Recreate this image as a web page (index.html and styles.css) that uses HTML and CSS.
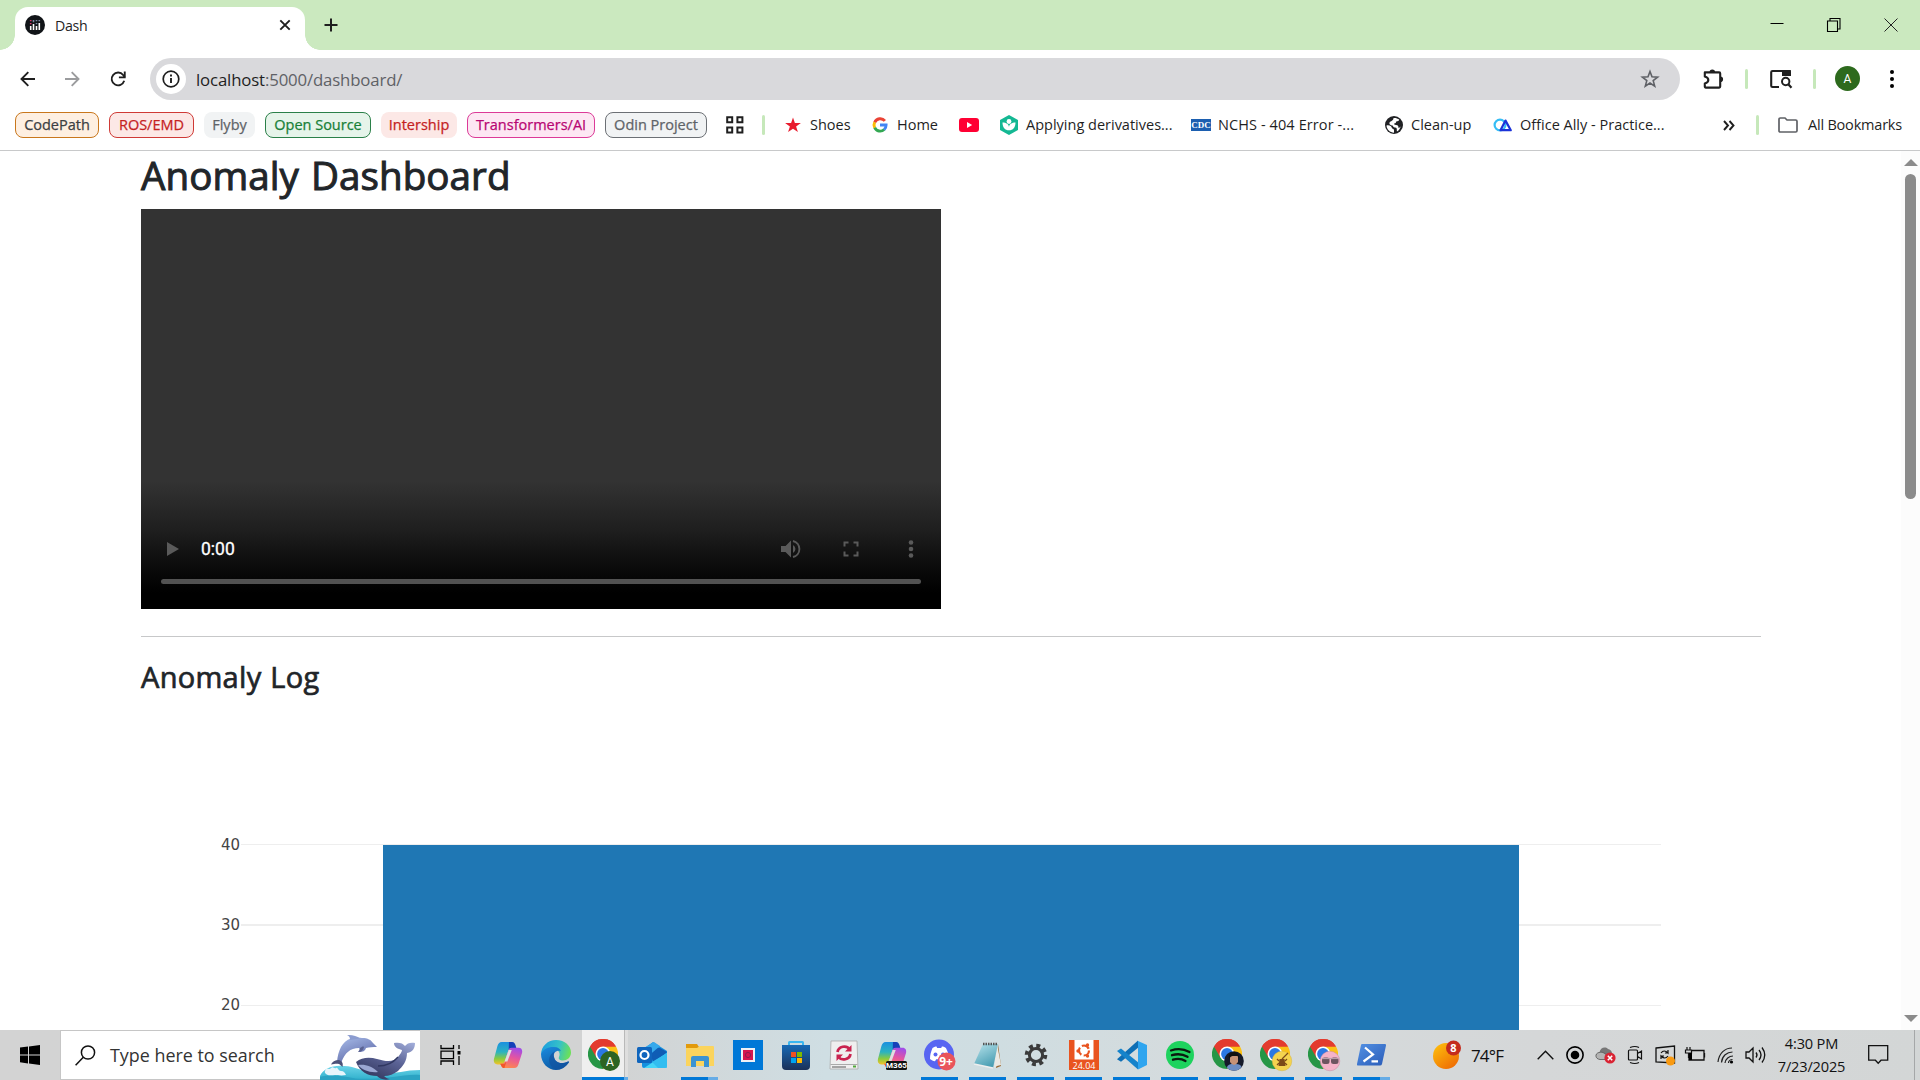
FILE: index.html
```html
<!DOCTYPE html>
<html lang="en">
<head>
<meta charset="utf-8">
<title>Dash</title>
<link rel="stylesheet" href="styles.css">
</head>
<body>
<svg class="defs" width="0" height="0" aria-hidden="true">
  <defs>
    <linearGradient id="cpA" x1="0" y1="0" x2="0" y2="1"><stop offset="0" stop-color="#1b8fe0"/><stop offset=".45" stop-color="#2bb3c0"/><stop offset=".75" stop-color="#8ccb3c"/><stop offset="1" stop-color="#f4c22b"/></linearGradient>
    <linearGradient id="cpB" x1=".6" y1="0" x2=".3" y2="1"><stop offset="0" stop-color="#a24de6"/><stop offset=".45" stop-color="#e5559f"/><stop offset="1" stop-color="#ff8a4a"/></linearGradient>
    <linearGradient id="edA" x1="0" y1=".2" x2="1" y2=".4"><stop offset="0" stop-color="#1a9be0"/><stop offset=".6" stop-color="#35c1c8"/><stop offset="1" stop-color="#6be05a"/></linearGradient>
    <linearGradient id="edB" x1="0" y1="0" x2=".5" y2="1"><stop offset="0" stop-color="#1b8ce0"/><stop offset="1" stop-color="#0c59a4"/></linearGradient>
    <linearGradient id="stA" x1="0" y1="0" x2="0" y2="1"><stop offset="0" stop-color="#1769b5"/><stop offset="1" stop-color="#1b3158"/></linearGradient>
    <linearGradient id="sunA" x1="0" y1="0" x2=".8" y2="1"><stop offset="0" stop-color="#ffc40c"/><stop offset="1" stop-color="#ee6a04"/></linearGradient>
    <linearGradient id="npA" x1="0" y1="0" x2=".5" y2="1"><stop offset="0" stop-color="#b9e4ec"/><stop offset="1" stop-color="#4b9fb4"/></linearGradient>
    <linearGradient id="psA" x1="0" y1="0" x2="1" y2="1"><stop offset="0" stop-color="#5391e4"/><stop offset="1" stop-color="#2a5cb8"/></linearGradient>
    <linearGradient id="dolA" x1="0" y1="0" x2=".6" y2="1"><stop offset="0" stop-color="#a9bdea"/><stop offset="1" stop-color="#5f6aa8"/></linearGradient>
    <linearGradient id="whA" x1="1" y1="0" x2=".3" y2="1"><stop offset="0" stop-color="#a4b0dc"/><stop offset=".5" stop-color="#5b6396"/><stop offset="1" stop-color="#33385f"/></linearGradient>
    <linearGradient id="seaA" x1="0" y1="0" x2="0" y2="1"><stop offset="0" stop-color="#6ad3e8"/><stop offset="1" stop-color="#2fb0cc"/></linearGradient>
    <symbol id="copilot" viewBox="0 0 30 30">
      <path d="M8.5 1h10c2 0 3 1.300 3.600 3l1 3.200h-4.500c-2 0-2.800 1.200-3.400 3l-3.400 11c-.6 1.800-1.500 3-3.500 3H4C1 24-.2 21.500.5 18.600L4 5.500C4.800 2.700 6 1 8.500 1z" fill="url(#cpA)"/>
      <path d="M16 1h3c2 0 3 1.300 3.600 3l1 3.200h-5c-1.500 0-2.300.6-2.900 2z" fill="#1540b8"/>
      <path d="M21.500 28h-10c-2 0-3-1.300-3.600-3l-1-1.500h1.500c2 0 3-1 3.600-3l3.400-10.500c.6-1.800 1.500-3 3.500-3H26c3 0 4.200 2.500 3.500 5.400L26 23.500c-.8 2.800-2 4.500-4.500 4.500z" fill="url(#cpB)"/>
      <path d="M7 23.500h4.500l2-2.800L11.300 28C9.600 28 8.600 27 8 25.500z" fill="#f2572b"/>
      <path d="M15.800 9.200h3.100l-4.500 12h-3z" fill="#dfe0e0"/>
    </symbol>
    <symbol id="chrome" viewBox="0 0 30 30">
      <path d="M15 15L2 7.500A15 15 0 0 1 28 7.500z" fill="#e33b2e"/>
      <path d="M15 15V7.500h13A15 15 0 0 1 15 30z" fill="#fbc116"/>
      <path d="M15 15l6.500 3.800L15 30A15 15 0 0 1 2 7.500z" fill="#269646"/>
      <path d="M15 7.500h13A15 15 0 0 0 2 7.500l6.500 11.200z" fill="#e33b2e"/>
      <circle cx="15" cy="15" r="7.500" fill="#fff"/><circle cx="15" cy="15" r="5.900" fill="#2b78e4"/>
    </symbol>
  </defs>
</svg>

<header class="browser">
  <div class="tabstrip">
    <div class="tab">
      <svg class="favicon" width="20" height="20" viewBox="0 0 20 20"><circle cx="10" cy="10" r="10" fill="#111418"/><path d="M5.700 11v4M8.500 9v6M11.500 11v4M14.300 8v7" stroke="#fff" stroke-width="1.600"/><path d="M5.700 5v1.300M5.700 8v1.300" stroke="#d8396c" stroke-width="1.600"/><path d="M8.500 5v2.300M11.500 5v1.300M11.500 8v1.300M14.300 5v1.300" stroke="#7c8aa5" stroke-width="1.600"/></svg>
      <span class="tab-title">Dash</span>
      <svg width="12" height="12" viewBox="0 0 12 12"><path d="M1.300 1.300l9.400 9.400M10.700 1.300l-9.400 9.400" stroke="#1f1f1f" stroke-width="1.900"/></svg>
    </div>
    <svg class="newtab" width="14" height="14" viewBox="0 0 14 14"><path d="M7 .5v13M.5 7h13" stroke="#1f1f1f" stroke-width="2"/></svg>
    <div class="window-buttons">
      <svg width="14" height="14" viewBox="0 0 14 14"><path d="M.5 5.500h13" stroke="#000"/></svg>
      <svg width="14" height="14" viewBox="0 0 14 14"><path d="M.5 3h10v10.500H.5zM3 3V.5h10V11h-2.500" fill="none" stroke="#000" stroke-width="1.100"/></svg>
      <svg width="14" height="14" viewBox="0 0 14 14"><path d="M.5.5l13 13M13.500.5l-13 13" stroke="#222"/></svg>
    </div>
  </div>

  <div class="toolbar">
    <svg width="16" height="16" viewBox="0 0 16 16"><path d="M15 8H2M8.300 1.200L1.500 8l6.800 6.800" fill="none" stroke="#1f1f1f" stroke-width="1.900"/></svg>
    <svg width="16" height="16" viewBox="0 0 16 16"><path d="M1 8h13M7.700 1.200L14.500 8l-6.800 6.800" fill="none" stroke="#9b9c9e" stroke-width="1.900"/></svg>
    <svg width="16" height="16" viewBox="0 0 18 18"><path d="M16 11A7.200 7.200 0 1 1 14.800 4.500L16.500 7" fill="none" stroke="#1f1f1f" stroke-width="2.100"/><path d="M16.600.5v6.700H10" fill="none" stroke="#1f1f1f" stroke-width="2.100"/></svg>
    <div class="omnibox">
      <span class="site-info"><svg width="18" height="18" viewBox="0 0 18 18"><circle cx="9" cy="9" r="7.800" fill="none" stroke="#1f1f1f" stroke-width="1.700"/><path d="M9 8v5M9 4.600v1.900" stroke="#1f1f1f" stroke-width="1.900"/></svg></span>
      <span class="url"><b>localhost</b>:5000/dashboard/</span>
      <svg class="star" width="20" height="20" viewBox="0 0 20 20"><path d="M10 2.500l2 5.300 5.600.3-4.400 3.500 1.500 5.500L10 14l-4.700 3.100 1.500-5.500-4.400-3.500 5.600-.3z" fill="none" stroke="#5f6166" stroke-width="1.600"/></svg>
    </div>
    <svg width="22" height="22" viewBox="0 0 22 22"><path d="M2.800 4.400h14.400q1 0 1 1v13.200q0 1-1 1H3.800q-1 0-1-1v-3.200c4.700-1.400 4.700-5.600 0-7z" fill="none" stroke="#1f1f1f" stroke-width="2.100" stroke-linejoin="round"/><path d="M7.500 4.200a2.800 2.800 0 0 1 5.600 0zM18.300 8.500a2.800 2.800 0 0 1 0 5.600z" fill="#1f1f1f"/></svg>
    <i class="divider"></i>
    <svg width="22" height="20" viewBox="0 0 22 20"><path d="M9 18H2.500Q1.200 18 1.200 16.700V3.300Q1.200 2 2.500 2h17.200v4" fill="none" stroke="#1f1f1f" stroke-width="2.100"/><path d="M12 1h7.500q1.500 0 1.500 1.500V7h-9z" fill="#1f1f1f"/><circle cx="15.700" cy="12.500" r="3.700" fill="none" stroke="#1f1f1f" stroke-width="2"/><path d="M18.300 15.200l3.200 3.600" stroke="#1f1f1f" stroke-width="2.200"/></svg>
    <i class="divider"></i>
    <span class="avatar">A</span>
    <svg width="6" height="20" viewBox="0 0 6 20"><circle cx="3" cy="3" r="2" /><circle cx="3" cy="10" r="2"/><circle cx="3" cy="17" r="2"/></svg>
  </div>

  <nav class="bookmarks">
    <div class="groups">
      <span class="pill orange">CodePath</span>
      <span class="pill red">ROS/EMD</span>
      <span class="pill plain">Flyby</span>
      <span class="pill green">Open Source</span>
      <span class="pill rose">Intership</span>
      <span class="pill pink">Transformers/AI</span>
      <span class="pill gray">Odin Project</span>
    </div>
    <svg class="apps" width="18" height="18" viewBox="0 0 18 18"><path d="M1.200 1.200h5v5h-5zM11.400 1.200h5v5h-5zM1.200 11.400h5v5h-5zM11.400 11.400h5v5h-5z" fill="none" stroke="#1f1f1f" stroke-width="2"/></svg>
    <i class="divider"></i>
    <div class="links">
      <a><svg width="20" height="20" viewBox="0 0 20 20"><path d="M10 2.500l1.900 5.400 6 .1-4.800 3.500 1.800 5.500L10 13.700 5.100 17l1.800-5.500L2.100 8l6-.1z" fill="#e81c2e"/></svg><span>Shoes</span></a>
      <a><svg width="20" height="20" viewBox="0 0 20 20"><g fill="none" stroke-width="2.900"><path d="M14.900 5.900A6 6 0 0 0 4.700 7.500" stroke="#ea4335"/><path d="M4.700 7.200a6 6 0 0 0 0 5.600" stroke="#fbbc05"/><path d="M4.700 12.600a6 6 0 0 0 9.500 1.900" stroke="#34a853"/><path d="M10 10h6.100a6 6 0 0 1-2 4.600" stroke="#4285f4"/></g></svg><span>Home</span></a>
      <a><svg width="20" height="20" viewBox="0 0 20 20"><rect y="3" width="20" height="14" rx="3" fill="#ff0033"/><path d="M8 7l5.200 3L8 13z" fill="#fff"/></svg></a>
      <a><svg width="20" height="20" viewBox="0 0 20 20"><path d="M10 0l9 5v10l-9 5-9-5V5z" fill="#14b893"/><circle cx="10" cy="6.500" r="2.400" fill="#fff"/><path d="M3.500 7.500c3.700 0 6.200 1.500 6.500 4.500.3-3 2.800-4.500 6.500-4.500 0 5-2.500 7.800-6.500 7.800S3.500 12.500 3.500 7.500z" fill="#fff"/></svg><span>Applying derivatives...</span></a>
      <a><span class="cdc">CDC</span><span class="nchs">NCHS - 404 Error -...</span></a>
      <a><svg width="20" height="20" viewBox="0 0 20 20"><circle cx="10" cy="10" r="9" fill="#202124"/><path d="M2.500 10.500c3-.5 5 .5 5.300 2.200.2 1.400 2.200.8 2.200 2.300v2.700C6 17.500 2.700 14.700 2.500 10.500zM9.500 3c2-.3 4 .2 5.700 1.600-.2 1.600-1.500 1.900-3 1.900-.2 1.300-.5 2-2 2-.3 1 .3 1.400 1.800 1.400 2.300 0 2.500 1.600 2.500 3 1.200-.2 1.800-1 2.300-1.900-.8 3-2 4.500-3.800 5.600-.5-1.600.2-3-.8-3.800-1.700-.2-3.200-.2-3.200-2C6 10 5 9.300 5.500 7.500 6.500 6 9.500 6 9.500 3z" fill="#fff"/></svg><span>Clean-up</span></a>
      <a><svg width="20" height="20" viewBox="0 0 20 20"><circle cx="7" cy="10" r="5.400" fill="none" stroke="#35bdf5" stroke-width="2.200"/><path d="M7.500 15.200l5-9.600 5.300 9.600z" fill="none" stroke="#1b32d8" stroke-width="2.200" stroke-linejoin="round"/></svg><span>Office Ally - Practice...</span></a>
    </div>
    <svg class="more" width="12" height="11" viewBox="0 0 12 11"><path d="M1 1l4 4.500L1 10M6.500 1l4 4.500-4 4.500" fill="none" stroke="#1f1f1f" stroke-width="1.900"/></svg>
    <i class="divider"></i>
    <svg class="folder" width="20" height="16" viewBox="0 0 20 16"><path d="M1 2.300Q1 1 2.300 1H7l2 2h8.700Q19 3 19 4.300v9.400Q19 15 17.700 15H2.300Q1 15 1 13.700z" fill="none" stroke="#5f6166" stroke-width="1.700"/></svg>
    <span class="all">All Bookmarks</span>
  </nav>
</header>

<main class="viewport">
  <div class="page">
    <h1>Anomaly Dashboard</h1>
    <div class="video">
      <div class="controls">
        <svg width="12" height="16" viewBox="0 0 12 16"><path d="M0 1l12 7-12 7z" fill="#5a5a5a"/></svg>
        <span class="time">0:00</span>
        <svg width="20" height="20" viewBox="0 0 20 20"><path d="M0 7h4.500L10 1.500v17L4.500 13H0z" fill="#5a5a5a"/><path d="M12 6a4.500 4.500 0 0 1 0 8z" fill="#5a5a5a"/><path d="M12 2a8.200 8.200 0 0 1 0 16" fill="none" stroke="#5a5a5a" stroke-width="1.900"/></svg>
        <svg width="16" height="16" viewBox="0 0 16 16"><path d="M1.500 5.500v-4h4M10.500 1.500h4v4M14.500 10.500v4h-4M5.500 14.500h-4v-4" fill="none" stroke="#5a5a5a" stroke-width="2"/></svg>
        <svg width="6" height="18" viewBox="0 0 6 18"><g fill="#5a5a5a"><circle cx="3" cy="2.500" r="2.300"/><circle cx="3" cy="9" r="2.300"/><circle cx="3" cy="15.500" r="2.300"/></g></svg>
      </div>
      <div class="progress"></div>
    </div>
    <hr>
    <h3>Anomaly Log</h3>
    <svg class="chart" width="1620" height="249" viewBox="0 0 1620 249">
      <path d="M100 63.500h1420M100 224.500h1420" stroke="#eee"/><path d="M100 144h1420" stroke="#eee" stroke-width="2"/>
      <rect x="242" y="64" width="1136" height="185" fill="#1f77b4"/>
      <g class="ticks"><text x="99" y="69">40</text><text x="99" y="149">30</text><text x="99" y="229">20</text></g>
    </svg>
  </div>
  <div class="scrollbar">
    <svg width="14" height="7" viewBox="0 0 14 7"><path d="M7 0l7 7H0z" fill="#8b8b8b"/></svg>
    <div class="track"><div class="thumb"></div></div>
    <svg width="14" height="7" viewBox="0 0 14 7"><path d="M0 0h14L7 7z" fill="#8b8b8b"/></svg>
  </div>
</main>

<footer class="taskbar">
  <div class="start"><svg width="20" height="20" viewBox="0 0 20 20"><path d="M0 2.600L8 1.500v7.900H0zM9 1.400L20 0v9.400H9zM0 10.500h8v7.900l-8-1.100zM9 10.500h11V20L9 18.500z"/></svg></div>
  <div class="search">
    <svg width="21" height="21" viewBox="0 0 21 21"><circle cx="13" cy="7.500" r="6.600" fill="none" stroke="#111" stroke-width="1.500"/><path d="M8.300 12.300L.6 20.300" stroke="#111" stroke-width="1.500"/></svg>
    <span class="search-text">Type here to search</span>
    <svg class="sealife" width="100" height="49" viewBox="0 0 100 49">
      <path d="M0 49V45c3-7 12-11 24-10 12 .5 17 5 30 7 17 3 28-3 46-3v10z" fill="url(#seaA)"/>
      <path d="M0 46c10-3 22-1 33 1s30 0 40-1 18-3 27-2v5H0z" fill="#2ba3c3"/>
      <path d="M6 38c2-1 3 1 5-1s3 1 5 0 2 3 5 3 4 2 5 4c-5 1-8 0-11 0s-7 1-9-1-1-3 0-5z" fill="#e8f5fb"/>
      <path d="M17 31C18 20 22 10 31 7.500c4-1 8-1.500 11-.5 6 0 9 2 11 5l4 4c-4 0-8 0-11 1-1 3-3 4-7 4 1-2 1-3 0-4-9 0-14 5-17.500 14-1 1-2 1-3.500 0z" fill="url(#dolA)"/>
      <path d="M30 9c0-3-1-4-3-5 5-.5 10 1 13 3.500z" fill="#8b9cd0"/>
      <path d="M19 29c-4 0-7 2-8 4.500 4-1 6-1 8-.5 1 .7 2 1.500 3.500 3 1-4-.5-6-3.500-7z" fill="#4c5178"/>
      <path d="M40 17c2-1 3-2 4-1-1 4-3 5-6 5 1-1 2-3 2-4z" fill="#5a6292"/>
      <path d="M36 31c6-5 14-5 21-3 10 3 17 3 21-2 2-3 4-5 4-7-4-1-8-3-8-7 5-1 9 0 11 3 2-3 6-4 10-3 0 5-2 9-8 10 0 8-4 13-9 18-4 3-9 5-14 5 2 2 4 3 6 3-6 2-11-1-13-3-9 0-17-4-21-14z" fill="url(#whA)"/>
      <path d="M38 34c7-1 14 1 20 7-8 1-16-2-20-7z" fill="#9ba7d2"/>
      <path d="M58 35c8 0 15-3 20-9" fill="none" stroke="#303761" stroke-width="1.300"/>
    </svg>
  </div>
  <div class="taskview"><svg width="22" height="20" viewBox="0 0 22 20"><path d="M1 0v3.500h12.500V0M1 20v-4h12.500v4M1 6.200h12.500v7.500H1zM19 0v4M19 11v9" fill="none" stroke="#000" stroke-width="1.300"/><path d="M17.500 6h3v3.500h-3z"/></svg></div>
  <div class="apps-row">
    <div class="app"><svg width="30" height="28"><use href="#copilot" width="30" height="29"/></svg></div>
    <div class="app"><svg width="30" height="30" viewBox="0 0 30 30"><path d="M0 15C0 6 7 0 15 0c9 0 15 6 15 12.500 0 5-4 8-8 8-3 0-5-1.500-4-3.500 2-4-1-8-5-8-7 0-12 3-13 6z" fill="url(#edA)"/><path d="M0 14C2 9 8 6.500 13 7c4 0 6 2 7 4-5-1-8 2-7 6 1 5 6 8 14 4.500.7-.4 1.300.3.8 1C25 27 20 30 15 30 7 30 0 23 0 14z" fill="url(#edB)"/><path d="M13 17c1 5 6 8 14 4.500.7-.4 1.300.3.800 1C25 27 20 30 15 30 6 26 6 15 14 11.300 12.500 13 12.500 15 13 17z" fill="#1253a0" opacity=".7"/></svg></div>
    <div class="app active split"><svg width="32" height="32" viewBox="0 0 32 32"><use href="#chrome" width="30" height="30"/><circle cx="22" cy="22" r="10" fill="#2d6422"/><text x="22" y="26.500" class="badge-letter">A</text></svg></div>
    <div class="app"><svg width="30" height="28" viewBox="0 0 30 28"><path d="M5 9L16 1l14 9v15q0 2-2 2H7q-2 0-2-2z" fill="#1490df"/><path d="M9 7h14L30 11 17 22z" fill="#0f5db5"/><path d="M5 8l12-7 6 4-14 12z" fill="#36a9ec"/><path d="M30 12v14q0 1-2 1H7z" fill="#45d5f8"/><path d="M30 12L15 21l6 6h7q2 0 2-2z" fill="#32bdf0"/><rect y="6" width="15" height="16" rx="1.500" fill="#0f65bd"/><circle cx="7.500" cy="14" r="4" fill="none" stroke="#fff" stroke-width="2.200"/></svg></div>
    <div class="app run split"><svg width="28" height="24" viewBox="0 0 28 24"><path d="M0 1h11l2 3-2 3H0z" fill="#e29a0c"/><path d="M0 5h11l3-2h13q1 0 1 1v19H0z" fill="#fbd45d"/><path d="M5 24V15q0-2 2-2h14q2 0 2 2v9h-5v-6h-8v6z" fill="#3b93d2"/></svg></div>
    <div class="app"><svg width="30" height="30" viewBox="0 0 30 30"><path d="M0 0h30v30H0z" fill="#0078d7"/><path d="M8 8h14v14H8z" fill="#eef1f5"/><path d="M10 10h10v10H10z" fill="#d5154e"/><circle cx="15" cy="15" r="2.600" fill="none" stroke="#8e1d50"/></svg></div>
    <div class="app"><svg width="30" height="30" viewBox="0 0 30 30"><path d="M8 7V2.500Q8 2 8.500 2h13q.5 0 .5.500V7" fill="none" stroke="#3ab6f0" stroke-width="2"/><path d="M1 5h28v21q0 4-4 4H5q-4 0-4-4z" fill="url(#stA)"/><path d="M10 12h5v5h-5z" fill="#f25022"/><path d="M16 12h5v5h-5z" fill="#7fba00"/><path d="M10 18h5v5h-5z" fill="#00a4ef"/><path d="M16 18h5v5h-5z" fill="#ffb900"/></svg></div>
    <div class="app"><svg width="30" height="30" viewBox="0 0 30 30"><path d="M2 1h26l1 28H1z" fill="#efefef" stroke="#aaa" stroke-width=".8"/><path d="M1.500 24.500h27" stroke="#aaa"/><path d="M3 27h14" stroke="#333" stroke-width=".8"/><path d="M24 26.500h3" stroke="#52a83a" stroke-width="2"/><path d="M8.500 12c1-6 9-7 12-3M21.500 14c-1 6-9 7-12 3" fill="none" stroke="#c9234f" stroke-width="2.800"/><path d="M22.500 5v6.500H16zM7.500 21v-6.500H14z" fill="#c9234f"/></svg></div>
    <div class="app"><svg width="32" height="30" viewBox="0 0 32 30"><use href="#copilot" x="1" y="1" width="30" height="29"/><rect x="10" y="21" width="21" height="9" rx="1.500" fill="#111"/><text x="20.500" y="28.300" class="m365">M365</text></svg></div>
    <div class="app run"><svg width="32" height="32" viewBox="0 0 32 32"><circle cx="15" cy="15.500" r="15" fill="#5865f2"/><path d="M8.500 9c2-1.300 3-1.500 4-1.500l.7 1.500h4l.7-1.500c1 0 2.500.3 4 1.500 2 3.500 3 7 3 11-2 1.500-3 2-5 2.200l-1.200-2h-6.500l-1.200 2c-2-.2-3.500-1-5-2.200 0-4 1-7.500 2.500-11z" fill="#fff"/><circle cx="11.500" cy="15.500" r="2" fill="#5865f2"/><circle cx="19" cy="15.500" r="2" fill="#5865f2"/><circle cx="22.500" cy="22.500" r="9" fill="#e9545b"/><text x="22" y="27" class="count">9+</text></svg></div>
    <div class="app run"><svg width="30" height="28" viewBox="0 0 30 28"><path d="M25 3l3 22-5 2z" fill="#9a6b38"/><path d="M24 3L28 24l-4 1-3 2z" fill="#e9e9e4"/><path d="M10 3h15l-5 24L1 23z" fill="url(#npA)"/><path d="M10 3h15" stroke="#555" stroke-width="2.500" stroke-dasharray="1.500 1"/><path d="M1 23l19 4" stroke="#eee" stroke-width="1.500"/></svg></div>
    <div class="app run"><svg width="24" height="24" viewBox="0 0 24 24"><circle cx="12" cy="12" r="9.300" fill="none" stroke="#3b3b3b" stroke-width="4" stroke-dasharray="3.900 3.400"/><circle cx="12" cy="12" r="6.600" fill="none" stroke="#3b3b3b" stroke-width="3"/></svg></div>
    <div class="app run"><svg width="30" height="30" viewBox="0 0 30 30"><path d="M0 0h30v30H0z" fill="#e95420"/><path d="M5.500 0h19v19.500h-19z" fill="#fff"/><circle cx="15" cy="10.500" r="5" fill="none" stroke="#e95420" stroke-width="2.200" stroke-dasharray="8 2.400"/><g fill="#e95420"><circle cx="9" cy="11" r="1.700"/><circle cx="18.500" cy="5" r="1.700"/><circle cx="18.500" cy="16" r="1.700"/></g><text x="15" y="28.800" class="ubuntu">24.04</text></svg></div>
    <div class="app run"><svg width="30" height="30" viewBox="0 0 30 30"><path d="M21 1L30 5v20l-9 4.500z" fill="#2fa5ef"/><path d="M21 .5v7.200L4 21.800 0 19.300z" fill="#0f6fb5"/><path d="M21 29.500v-7.200L4 8.500 0 11z" fill="#1583cb"/></svg></div>
    <div class="app run"><svg width="28" height="28" viewBox="0 0 28 28"><circle cx="14" cy="14" r="14" fill="#1ed35e"/><path d="M5 9.500c6-2 13-1.500 18.500 1.500M6 14.200c5-1.500 11-1 15.500 1.600M7 18.700c4-1.200 9-.8 12.500 1.300" fill="none" stroke="#0b1a10" stroke-width="2.300" stroke-linecap="round"/></svg></div>
    <div class="app run"><svg width="32" height="32" viewBox="0 0 32 32"><use href="#chrome" width="30" height="30"/><circle cx="22" cy="22" r="9.800" fill="#151a2a"/><path d="M15 29c0-3 3-4 5-4h4c3 0 5 1 5.500 3-3 4.500-10 5-14.500 1z" fill="#6c8dc4"/><path d="M18 17q4-2 8 0v6q-4 6-8 0z" fill="#c79276"/><path d="M17 20c-1-5 2-7 5-7s6 3 5 7c-1-3-1-3-3-3s-5-1-7 3z" fill="#111"/></svg></div>
    <div class="app run"><svg width="32" height="32" viewBox="0 0 32 32"><use href="#chrome" width="30" height="30"/><circle cx="22" cy="22" r="9.800" fill="#f4d34f" stroke="#d8b743" stroke-width=".5"/><path d="M19.500 20h5l1 7h-7z" fill="#7c4a18"/><path d="M28 14l-6 6M17 20l2 2M27 20l-2 2M17 26l2-2M27 26l-2-2" stroke="#7c4a18" stroke-width="1.200"/></svg></div>
    <div class="app run"><svg width="32" height="32" viewBox="0 0 32 32"><use href="#chrome" width="30" height="30"/><circle cx="22" cy="22" r="9.800" fill="#f5b3c8" stroke="#c98ba0" stroke-width=".5"/><rect x="14" y="18.500" width="7.500" height="6.500" rx="2.500" fill="#6d5560"/><rect x="23" y="18.500" width="7.500" height="6.500" rx="2.500" fill="#6d5560"/><path d="M14 19.500h16.500" stroke="#b9a0aa" stroke-width="1.200"/></svg></div>
    <div class="app run split"><svg width="30" height="22" viewBox="0 0 30 22"><path d="M5 0h23q1.500 0 1 1.500L25 20q-.4 1.500-2 1.500H1q-1.500 0-1-1.500L4 1q.3-1 1-1z" fill="url(#psA)"/><path d="M8 3.500l8 7-9.500 7M14.500 17.300H21" fill="none" stroke="#fff" stroke-width="2.200"/></svg></div>
  </div>
  <div class="weather">
    <svg width="30" height="30" viewBox="0 0 30 30"><circle cx="13" cy="16" r="13" fill="url(#sunA)"/><circle cx="20.500" cy="8" r="7.500" fill="#c42b1c"/><text x="20.500" y="12" class="w-count">8</text></svg>
    <span class="temp">74°F</span>
  </div>
  <div class="tray">
    <svg width="17" height="10" viewBox="0 0 17 10"><path d="M.7 9.200L8.500 1.200l7.800 8" fill="none" stroke="#111" stroke-width="1.400"/></svg>
    <svg width="18" height="18" viewBox="0 0 18 18"><circle cx="9" cy="9" r="8.100" fill="none" stroke="#000" stroke-width="1.600"/><circle cx="9" cy="9" r="4.300"/></svg>
    <svg width="21" height="18" viewBox="0 0 21 18"><path d="M5 13C0 13-.5 7 4.500 6.500 5 2 10 0 13 3c2 .3 3.500 1.500 4 4v6z" fill="#777"/><path d="M4 6.500c4-1 6 1 9 4l-1 3H5C0 13-.5 7.500 4 6.500z" fill="#b4b4b4" stroke="#555" stroke-width=".8"/><circle cx="15" cy="12" r="5.600" fill="#d92333"/><path d="M12.800 9.800l4.400 4.400M17.200 9.800l-4.400 4.400" stroke="#fff" stroke-width="1.600"/></svg>
    <svg width="16" height="18" viewBox="0 0 16 18"><path d="M3 1.500q5-2 9 0M3 16.500q5 2 9 0M2.500 4h7q1 0 1 1v8q0 1-1 1h-7q-1 0-1-1V5q0-1 1-1zM10.500 7.500L14.500 5v8l-4-2.500" fill="none" stroke="#111" stroke-width="1.200"/></svg>
    <svg width="21" height="21" viewBox="0 0 21 21"><path d="M1 3L19.500 1v17L1 17z" fill="none" stroke="#111" stroke-width="1.300"/><path d="M6 8q3-4 7 0V5M13 8h-3M13 11q-3 4-7 0v3M6 11h3" fill="none" stroke="#111" stroke-width="1.200"/><circle cx="15.500" cy="16" r="4.500" fill="#f99a12"/></svg>
    <svg width="21" height="16" viewBox="0 0 21 16"><path d="M7 3.500h12V13H4V8M19.500 6v4.500" fill="none" stroke="#111" stroke-width="1.300"/><path d="M2 0v3M5 0v3M.5 3h6v3h-6zM3.500 6v5" fill="none" stroke="#111" stroke-width="1.200"/><path d="M4 6h3v7H4z"/></svg>
    <svg width="17" height="17" viewBox="0 0 17 17"><path d="M1 15C2 6 8 1 15 1M4.500 15.500C5 9 10 5 15.500 5M8 16c.5-4 4-7 8-7M11.500 16c0-2 2-3.500 4-3.500" fill="none" stroke="#222" stroke-width="1.200"/><circle cx="14.500" cy="15" r="1.600"/></svg>
    <svg width="21" height="18" viewBox="0 0 21 18"><path d="M1 6h3l4-4v14l-4-4H1zM11 6.500q2 2.500 0 5M14 4q4 5 0 10M17 1.500q5.500 7.500 0 15" fill="none" stroke="#111" stroke-width="1.300"/></svg>
  </div>
  <div class="clock"><span>4:30 PM</span><span>7/23/2025</span></div>
  <svg class="notify" width="21" height="20" viewBox="0 0 21 20"><path d="M.7.700h19v14.500H13l-2.800 3-2.800-3H.7z" fill="none" stroke="#111" stroke-width="1.300"/></svg>
  <div class="peek"></div>
</footer>
</body>
</html>
```

FILE: styles.css
```css
* { box-sizing: border-box; }
body {
  margin: 0;
  width: 1920px;
  height: 1080px;
  overflow: hidden;
  display: flex;
  flex-direction: column;
  background: #fff;
  color: #1f1f1f;
  font-family: "Open Sans", "Noto Sans", sans-serif;
  font-size: 14.5px;
  white-space: nowrap;
}
svg { display: block; flex: none; overflow: visible; }
.defs { position: absolute; }

/* tab strip */
.browser { flex: none; }
.tabstrip { display: flex; align-items: flex-end; height: 50px; padding-left: 15px; background: #cbe9bf; }
.tab {
  position: relative;
  display: flex;
  align-items: center;
  width: 290px;
  height: 43px;
  padding: 0 14px 7px 10px;
  border-radius: 13px 13px 0 0;
  background: #fff;
}
.tab::before, .tab::after { content: ""; position: absolute; bottom: 0; width: 15px; height: 15px; }
.tab::before { left: -15px; background: radial-gradient(circle at 0 0, transparent 14.5px, #fff 15px); }
.tab::after { right: -15px; background: radial-gradient(circle at 100% 0, transparent 14.5px, #fff 15px); }
.tab-title { flex: 1; padding-left: 10px; font-size: 14.2px; letter-spacing: -0.02em; }
.newtab { margin: 0 0 18px 19px; }
.window-buttons { display: flex; gap: 43px; margin: 0 22px 18px auto; }

/* toolbar */
.toolbar {
  display: grid;
  grid-template-columns: 56px 32px 59px 1533px 65px 3px 65px 3px 63px 26px;
  align-items: center;
  justify-items: center;
  height: 50px;
  padding: 8px 0 0;
}
.toolbar > svg, .avatar { margin-bottom: 1px; }
.omnibox {
  display: flex;
  align-items: center;
  justify-self: end;
  width: 1530px;
  height: 42px;
  padding: 0 20px 0 6px;
  border-radius: 21px;
  background: #d9d9dc;
}
.site-info { display: grid; place-items: center; width: 30px; height: 30px; border-radius: 50%; background: #fff; }
.url { flex: 1; padding-left: 10px; font-size: 16.8px; letter-spacing: -0.009em; color: #5f6166; }
.url b { font-weight: 400; color: #1f1f1f; }
.divider { width: 3px; height: 20px; border-radius: 2px; background: #c6e8ba; }
.avatar { display: grid; place-items: center; width: 25px; height: 25px; border-radius: 50%; background: #2d6a1d; color: #fff; font: 12px Roboto, sans-serif; }

/* bookmarks bar */
.bookmarks { display: flex; align-items: center; height: 51px; padding: 0 18px 0 15px; border-bottom: 1px solid #c8c9ca; }
.groups { display: flex; gap: 10px; }
.pill { height: 26px; border: 1.5px solid transparent; border-radius: 8px; line-height: 24px; text-align: center; -webkit-text-stroke: 0.25px currentColor; }
.orange { width: 84px; background: #feefe1; border-color: #c9771c; color: #3c4043; }
.red { width: 85px; background: #fce8e6; border-color: #cf3a36; color: #c5221f; }
.plain { width: 51px; background: #f1f3f4; color: #5f6368; }
.green { width: 106px; background: #e6f4ea; border-color: #2b8049; color: #188038; }
.rose { width: 76px; background: #fce8e6; color: #c5221f; }
.pink { width: 128px; background: #fde7f3; border-color: #dc3a98; color: #b80672; }
.gray { width: 102px; background: #f1f3f4; border-color: #6c7075; color: #5f6368; }
.apps { margin: 0 18px 0 19px; }
.links { display: grid; grid-template-columns: 87px 89px 40px 192px 193px 109px 172px; margin-left: 18px; }
.links a { display: flex; align-items: center; gap: 7px; height: 22px; line-height: 20px; }
.links a span, .all { margin-bottom: 1px; }
.nchs { letter-spacing: 0.1px; }
.all { letter-spacing: -0.2px; }
.links .cdc { width: 20px; height: 12px; background: #1c5fb0; color: #fff; font: bold 9px/12px "Liberation Serif", serif; text-align: center; }
.more { margin: 0 21px 0 auto; }
.folder { margin: 0 10px 0 19px; }

/* page */
.viewport { display: flex; flex: none; height: 879px; overflow: hidden; }
.page { width: 1901px; padding-left: 141px; color: #212529; }
h1, h3 { margin: 0; font-weight: 400; }
h1 { height: 58px; font-size: 38.6px; line-height: 49px; letter-spacing: 0.06px; word-spacing: 2px; -webkit-text-stroke: 1px currentColor; }
h3 { height: 121px; font-size: 29px; line-height: 33px; letter-spacing: 0.3px; word-spacing: 1px; -webkit-text-stroke: 0.7px currentColor; }
.video {
  display: flex;
  flex-direction: column;
  justify-content: flex-end;
  width: 800px;
  height: 400px;
  padding: 0 20px 25px;
  background: linear-gradient(#333 0, #333 68%, #1f1f1f 80%, #0a0a0a 90%, #000 96%);
}
.controls { display: grid; grid-template-columns: 34px 1fr 62px 65px 13px; align-items: center; height: 20px; margin-bottom: 20px; padding-left: 6px; }
.time { font: 17.5px Roboto, sans-serif; color: #fff; -webkit-text-stroke: 0.3px #fff; }
.progress { height: 5px; border-radius: 3px; background: #525252; }
hr { width: 1620px; height: 1px; margin: 27px 0 23px; border: 0; background: #c7c8c9; }
.ticks { font: 15px "DejaVu Sans", sans-serif; fill: #444; text-anchor: end; }

.scrollbar { display: flex; flex-direction: column; align-items: center; width: 19px; padding: 8px 0; background: #fcfcfc; }
.track { flex: 1; padding-top: 8px; }
.thumb { width: 11px; height: 325px; border-radius: 6px; background: #8b8b8b; }

/* taskbar */
.taskbar {
  display: flex;
  align-items: stretch;
  flex: none;
  height: 50px;
  background: linear-gradient(90deg, #d3d3d3 0, #d2d3d3 32%, #cfdee3 43%, #cfdde1 52%, #d5dbdd 62%, #d5d7d8 80%, #d3d6d6 100%);
  color: #111;
}
.start { display: grid; place-items: center; width: 60px; }
.search { display: flex; align-items: center; width: 360px; padding-left: 14px; border: 1px solid #c6c6c6; border-right: 0; background: #fff; }
.search-text { flex: 1; padding-left: 14px; font-size: 17.9px; color: #333; }
.taskview { display: grid; place-items: center; width: 62px; }
.apps-row { display: flex; margin-left: 2px; }
.app { position: relative; display: grid; place-items: center; width: 48px; }
.app::after { content: ""; position: absolute; left: 5px; bottom: 0; width: 37px; height: 3px; }
.run::after { background: #0078d7; }
.active { background: linear-gradient(90deg, transparent 2px, #efefef 2px, #efefef 44px, #b9b9b9 44px, #b9b9b9 45px, #dedede 45px); }
.active::after { left: 2px; width: 42px; background: #0078d7; }
.split::before { content: ""; position: absolute; z-index: 1; left: 32px; bottom: 0; width: 10px; height: 3px; background: #66ace6; }
.active.split::before { left: 44px; width: 4px; }
.badge-letter { font: 12px Roboto, sans-serif; fill: #fff; text-anchor: middle; }
.m365 { font: bold 8px Roboto, sans-serif; fill: #fff; text-anchor: middle; }
.count { font: bold 12px "Open Sans", sans-serif; fill: #fff; text-anchor: middle; }
.ubuntu { font: 9px "Open Sans", sans-serif; fill: #fff; text-anchor: middle; }
.w-count { font: bold 11px "Open Sans", sans-serif; fill: #fff; text-anchor: middle; }
.weather { display: flex; align-items: center; gap: 8px; margin-left: 37px; font-size: 17px; }
.temp { width: 35px; letter-spacing: -0.05em; }
.tray { display: grid; grid-template-columns: repeat(8, 30px); align-items: center; justify-items: center; margin-left: 24px; }
.clock { display: flex; flex-direction: column; align-items: center; justify-content: center; width: 85px; margin-left: -1px; font-size: 14.6px; line-height: 23px; letter-spacing: -0.012em; }
.notify { align-self: center; margin-left: 14px; }
.peek { width: 6px; margin-left: auto; border-left: 1px solid #a5a7a8; }
```
